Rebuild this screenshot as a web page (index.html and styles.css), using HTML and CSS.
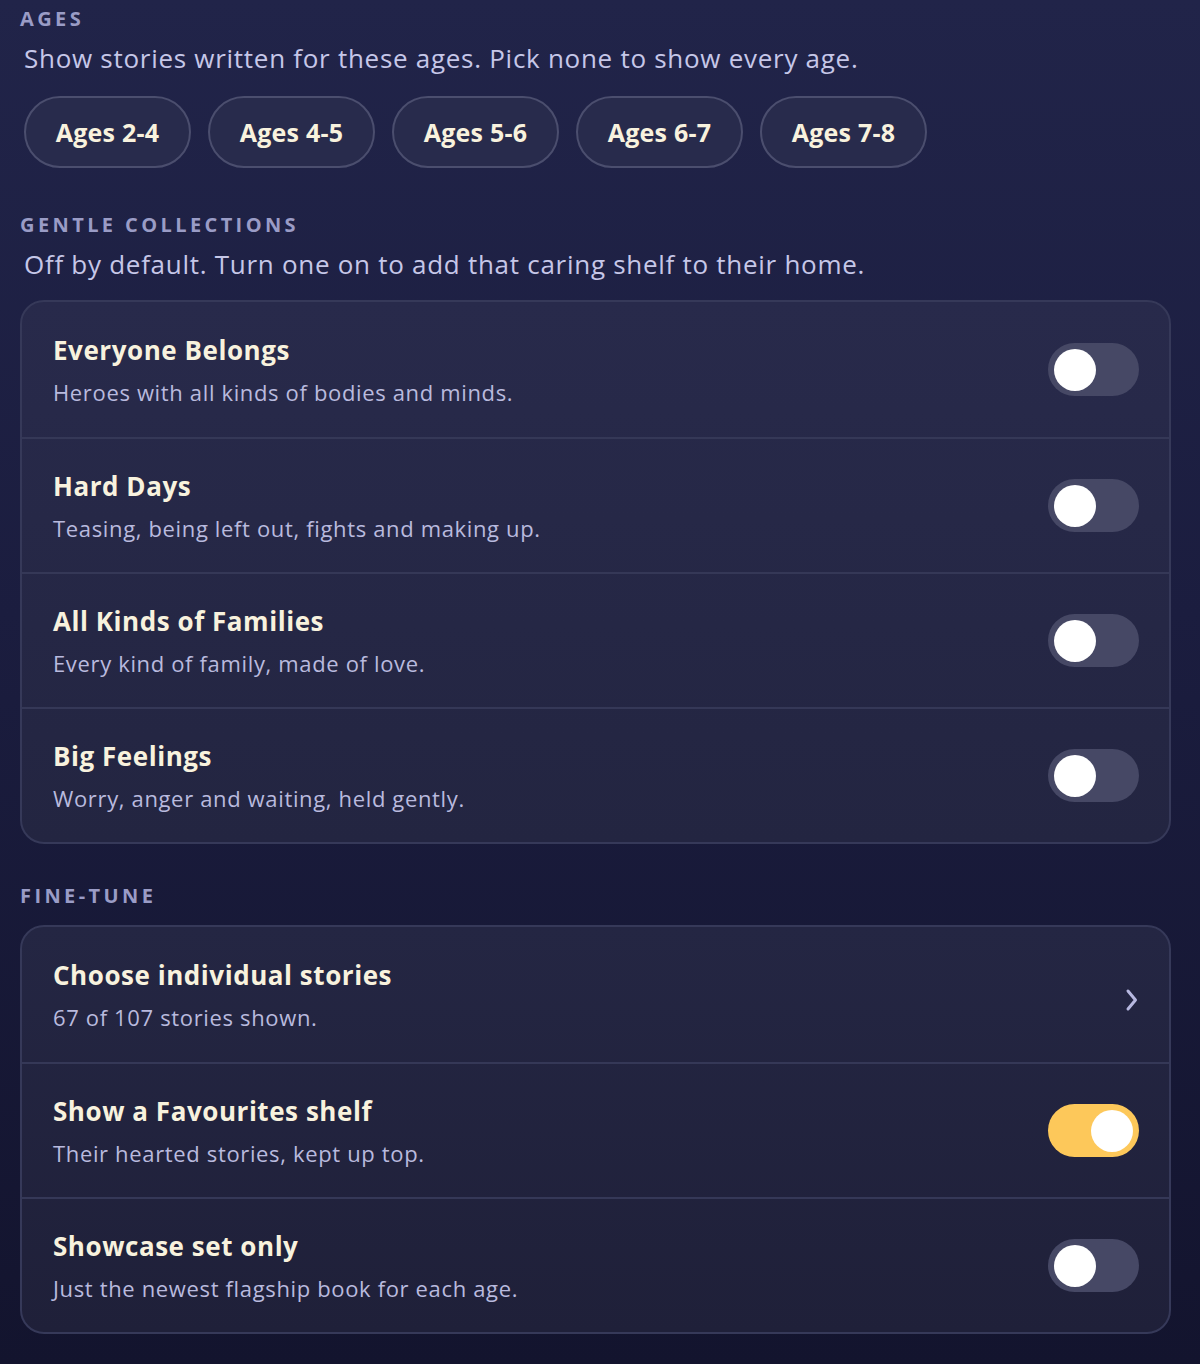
FILE: index.html
```html
<!DOCTYPE html>
<html lang="en">
<head>
<meta charset="utf-8">
<title>Library settings</title>
<link rel="stylesheet" href="styles.css">
</head>
<body>
<main class="settings">
  <section class="group">
    <h2 class="group-label">Ages</h2>
    <p class="group-hint">Show stories written for these ages. Pick none to show every age.</p>
    <div class="chips">
      <button class="chip">Ages 2-4</button>
      <button class="chip">Ages 4-5</button>
      <button class="chip">Ages 5-6</button>
      <button class="chip">Ages 6-7</button>
      <button class="chip">Ages 7-8</button>
    </div>
  </section>

  <section class="group group-collections">
    <h2 class="group-label">Gentle collections</h2>
    <p class="group-hint">Off by default. Turn one on to add that caring shelf to their home.</p>
    <div class="card">
      <div class="row">
        <div class="row-text">
          <h3 class="row-title">Everyone Belongs</h3>
          <p class="row-sub">Heroes with all kinds of bodies and minds.</p>
        </div>
        <span class="toggle"><span class="knob"></span></span>
      </div>
      <div class="row">
        <div class="row-text">
          <h3 class="row-title">Hard Days</h3>
          <p class="row-sub">Teasing, being left out, fights and making up.</p>
        </div>
        <span class="toggle"><span class="knob"></span></span>
      </div>
      <div class="row">
        <div class="row-text">
          <h3 class="row-title">All Kinds of Families</h3>
          <p class="row-sub">Every kind of family, made of love.</p>
        </div>
        <span class="toggle"><span class="knob"></span></span>
      </div>
      <div class="row">
        <div class="row-text">
          <h3 class="row-title">Big Feelings</h3>
          <p class="row-sub">Worry, anger and waiting, held gently.</p>
        </div>
        <span class="toggle"><span class="knob"></span></span>
      </div>
    </div>
  </section>

  <section class="group group-finetune">
    <h2 class="group-label">Fine-tune</h2>
    <div class="card card-dim">
      <div class="row">
        <div class="row-text">
          <h3 class="row-title">Choose individual stories</h3>
          <p class="row-sub">67 of 107 stories shown.</p>
        </div>
        <svg class="chevron" viewBox="0 0 16 24" width="16" height="24" aria-hidden="true">
          <path d="M4 3 L11.5 12 L4 21" fill="none" stroke="currentColor" stroke-width="3" stroke-linecap="round" stroke-linejoin="round"/>
        </svg>
      </div>
      <div class="row">
        <div class="row-text">
          <h3 class="row-title">Show a Favourites shelf</h3>
          <p class="row-sub">Their hearted stories, kept up top.</p>
        </div>
        <span class="toggle is-on"><span class="knob"></span></span>
      </div>
      <div class="row">
        <div class="row-text">
          <h3 class="row-title">Showcase set only</h3>
          <p class="row-sub">Just the newest flagship book for each age.</p>
        </div>
        <span class="toggle"><span class="knob"></span></span>
      </div>
    </div>
  </section>
</main>
</body>
</html>
```

FILE: styles.css
```css
* {
  box-sizing: border-box;
}

html,
body {
  margin: 0;
  padding: 0;
}

body {
  min-height: 1364px;
  background: linear-gradient(180deg, #212449 0%, #1b1d3f 45%, #13142e 100%);
  font-family: "Open Sans", "Noto Sans", sans-serif;
  color: #c3c4e4;
}

.settings {
  padding: 6px 29px 0 20px;
  display: flex;
  flex-direction: column;
}

.group {
  display: flex;
  flex-direction: column;
}

.group-collections {
  margin-top: 44px;
}

.group-finetune {
  margin-top: 39px;
}

.group-label {
  margin: 0;
  font-size: 20px;
  font-weight: 700;
  letter-spacing: 3.4px;
  text-transform: uppercase;
  color: #9a9cc6;
  line-height: 26px;
}

.group-hint {
  margin: 6px 0 0 4px;
  font-size: 26px;
  font-weight: 400;
  letter-spacing: 0.72px;
  line-height: 40px;
  color: #c6c7e8;
}

.chips {
  display: flex;
  gap: 17px;
  margin: 18px 0 0 4px;
}

.chip {
  width: 167px;
  height: 72px;
  padding: 0;
  border-radius: 36px;
  border: 2px solid #4b4e6e;
  background: #282b4c;
  color: #f8f2de;
  font-family: inherit;
  font-size: 25px;
  font-weight: 700;
  letter-spacing: 0.2px;
}

.card {
  margin-top: 16px;
  border: 2px solid #363959;
  border-radius: 24px;
  background: linear-gradient(180deg, #282a4b 0%, #232541 100%);
  overflow: hidden;
}

.card-dim {
  background: linear-gradient(180deg, #242643 0%, #1f2039 100%);
}

.row {
  height: 135px;
  display: flex;
  align-items: center;
  justify-content: space-between;
  padding: 0 30px 0 31px;
}

.row + .row {
  border-top: 2px solid #353857;
}

.row-text {
  display: flex;
  flex-direction: column;
  gap: 10px;
}

.row-title {
  margin: 0;
  font-size: 26px;
  font-weight: 700;
  letter-spacing: 0.55px;
  line-height: 34px;
  color: #f8f2de;
}

.row-sub {
  margin: 0;
  font-size: 22px;
  letter-spacing: 0.65px;
  line-height: 30px;
  color: #b9bade;
}

.toggle {
  width: 91px;
  height: 53px;
  border-radius: 27px;
  background: #464865;
  display: flex;
  align-items: center;
  padding: 0 6px;
}

.knob {
  width: 42px;
  height: 42px;
  border-radius: 50%;
  background: #ffffff;
}

.toggle.is-on {
  background: #fdc85a;
  justify-content: flex-end;
}

.chevron {
  color: #b7b8e0;
  margin: 10px -1px 0 0;
}
```
